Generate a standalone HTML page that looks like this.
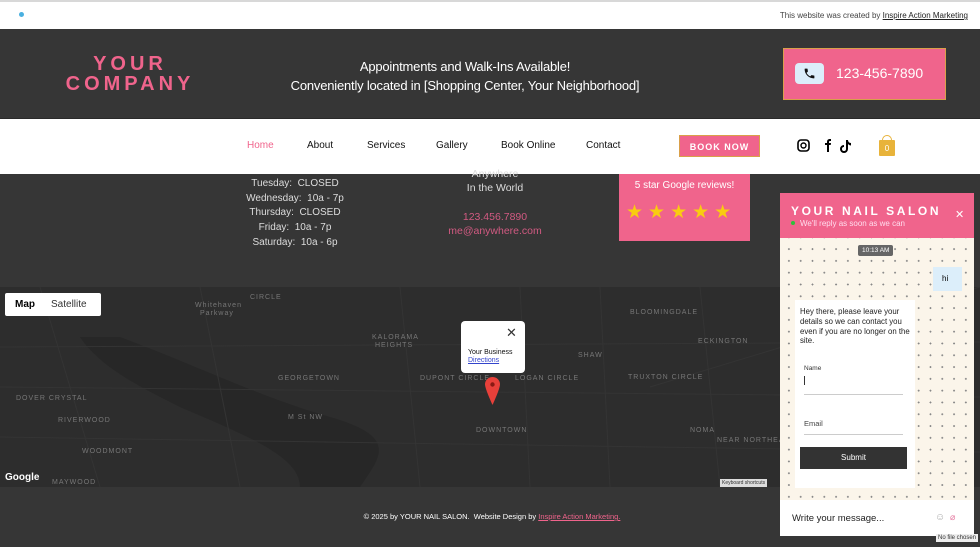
<!DOCTYPE html>
<html><head><meta charset="utf-8"><style>
*{margin:0;padding:0;box-sizing:border-box}
body{width:980px;height:547px;overflow:hidden;background:#363636;font-family:"Liberation Sans",sans-serif;position:relative}
.abs{position:absolute}
.pink{background:#f0648c}
.t{color:#fff;text-align:center}
</style></head><body>
<div class="abs" style="left:0;top:0;width:980px;height:29px;background:#fff;border-top:2px solid #d8d8d8"></div>
<div class="abs" style="left:19px;top:12px;width:5px;height:5px;border-radius:50%;background:#4ab0e0"></div>
<div class="abs" style="right:12px;top:11px;font-size:8px;color:#444">This website was created by <u style="color:#222">Inspire Action Marketing</u></div>
<div class="abs" style="left:0;top:29px;width:980px;height:89px;background:#363636"></div>
<div class="abs" style="left:62px;top:54px;width:136px;color:#f0648c;font-weight:bold;font-size:20px;letter-spacing:4px;line-height:20px;text-align:center">YOUR<br>COMPANY</div>
<div class="abs t" style="left:270px;top:57px;width:390px;font-size:13px;line-height:19px;letter-spacing:-0.2px">Appointments and Walk-Ins Available!<br>Conveniently located in [Shopping Center, Your Neighborhood]</div>
<div class="abs pink" style="left:783px;top:48px;width:163px;height:52px;border:1px solid #d9a04a"></div>
<div class="abs" style="left:795px;top:63px;width:29px;height:21px;background:#dceefa;border-radius:4px"></div>
<svg class="abs" style="left:803px;top:67px" width="13" height="13" viewBox="0 0 24 24"><path d="M6.6 10.8c1.4 2.8 3.8 5.1 6.6 6.6l2.2-2.2c.3-.3.7-.4 1-.2 1.1.4 2.3.6 3.6.6.6 0 1 .4 1 1V20c0 .6-.4 1-1 1C10.6 21 3 13.4 3 4c0-.6.4-1 1-1h3.5c.6 0 1 .4 1 1 0 1.3.2 2.5.6 3.6.1.3 0 .7-.2 1z" fill="#111"/></svg>
<div class="abs" style="left:836px;top:65px;color:#fff;font-size:14px">123-456-7890</div>
<div class="abs" style="left:0;top:118px;width:980px;height:56px;background:#fff;border-top:1px solid #2a2a2a"></div>
<div class="abs" style="top:140px;left:247px;font-size:10px;color:#f0648c">Home</div>
<div class="abs" style="top:140px;left:307px;font-size:10px;color:#111">About</div>
<div class="abs" style="top:140px;left:367px;font-size:10px;color:#111">Services</div>
<div class="abs" style="top:140px;left:436px;font-size:10px;color:#111">Gallery</div>
<div class="abs" style="top:140px;left:501px;font-size:10px;color:#111">Book Online</div>
<div class="abs" style="top:140px;left:586px;font-size:10px;color:#111">Contact</div>
<div class="abs pink" style="left:679px;top:135px;width:81px;height:22px;color:#fff;font-size:9px;letter-spacing:1px;text-align:center;line-height:22px;font-weight:bold;border:1px solid #d9a04a">BOOK NOW</div>
<svg class="abs" style="left:797px;top:139px" width="60" height="14"><rect x="1" y="1" width="11" height="11" rx="3" fill="none" stroke="#000" stroke-width="1.6"/><circle cx="6.5" cy="6.5" r="2.5" fill="none" stroke="#000" stroke-width="1.4"/><path d="M30 13V6h-2V4h2V3c0-2 1-3 3-3h1v2h-1c-1 0-1 .5-1 1v1h2l-.3 2H32v7z" fill="#000"/><path d="M49 1v9a2 2 0 1 1-2-2V6a4 4 0 1 0 4 4V5c1 1 2 1.5 3 1.5V4c-2 0-3-1.5-3-3z" fill="#000"/></svg>
<div class="abs" style="left:879px;top:140px;width:16px;height:16px;background:#e8b33a;border-radius:1px;color:#fff;font-size:8px;text-align:center;line-height:18px">0</div>
<div class="abs" style="left:882px;top:135px;width:10px;height:8px;border:1.5px solid #e8b33a;border-bottom:none;border-radius:5px 5px 0 0"></div>
<div class="abs t" style="left:220px;top:177px;width:150px;font-size:10px;line-height:14.7px;color:#ddd">Tuesday:&nbsp; CLOSED<br>Wednesday:&nbsp; 10a - 7p<br>Thursday:&nbsp; CLOSED<br>Friday:&nbsp; 10a - 7p<br>Saturday:&nbsp; 10a - 6p</div>
<div class="abs t" style="left:420px;top:167px;width:150px;font-size:10.5px;line-height:14px;color:#ddd">Anywhere<br>In the World</div>
<div class="abs t" style="left:420px;top:210px;width:150px;font-size:10.5px;line-height:14px;color:#d25a82">123.456.7890<br>me@anywhere.com</div>
<div class="abs pink" style="left:619px;top:174px;width:131px;height:67px"></div>
<div class="abs t" style="left:619px;top:180px;width:131px;font-size:10px">5 star Google reviews!</div>
<div class="abs" style="left:626px;top:201px;width:125px;font-size:19px;color:#f9cc10;letter-spacing:5px">★★★★★</div>
<div class="abs" style="left:0;top:287px;width:980px;height:200px;background:#2d2d2d;overflow:hidden">
<svg width="980" height="200" style="position:absolute;left:0;top:0">
<path d="M120 50 C200 80 260 110 330 130 C400 150 380 170 360 200 L300 200 C300 170 250 150 180 120 C140 100 100 80 80 50Z" fill="#272727"/>
<g stroke="#343434" stroke-width="1" fill="none">
<path d="M0 100 L980 110"/><path d="M0 150 L980 165"/><path d="M400 0 L420 200"/><path d="M520 0 L530 200"/><path d="M600 0 L610 200"/><path d="M650 100 L980 0"/><path d="M200 0 L240 200"/><path d="M40 0 L100 200"/><path d="M0 60 L980 55"/><path d="M700 0 L720 200"/><path d="M850 0 L860 200"/>
</g>
<g fill="#777" font-size="7" font-family="Liberation Sans" letter-spacing="1">
<text x="250" y="12">CIRCLE</text><text x="195" y="20">Whitehaven</text><text x="200" y="28">Parkway</text>
<text x="372" y="52">KALORAMA</text><text x="375" y="60">HEIGHTS</text><text x="630" y="27">BLOOMINGDALE</text>
<text x="698" y="56">ECKINGTON</text><text x="578" y="70">SHAW</text><text x="278" y="93">GEORGETOWN</text>
<text x="420" y="93">DUPONT CIRCLE</text><text x="515" y="93">LOGAN CIRCLE</text><text x="628" y="92">TRUXTON CIRCLE</text>
<text x="16" y="113">DOVER CRYSTAL</text><text x="58" y="135">RIVERWOOD</text><text x="476" y="145">DOWNTOWN</text>
<text x="690" y="145">NOMA</text><text x="717" y="155">NEAR NORTHEAST</text><text x="82" y="166">WOODMONT</text>
<text x="52" y="197">MAYWOOD</text><text x="288" y="132">M St NW</text>
</g></svg>
<div class="abs" style="left:5px;top:6px;width:96px;height:23px;background:#fff;border-radius:2px;font-size:10px;line-height:23px"><b style="margin-left:10px">Map</b><span style="margin-left:16px;color:#333">Satellite</span></div>
<div class="abs" style="left:5px;top:185px;color:#fff;font-size:10px;font-weight:bold">Google</div>
<div class="abs" style="left:720px;top:192px;background:#ddd;font-size:5px;color:#333;padding:1px 2px">Keyboard shortcuts</div>
<div class="abs" style="left:461px;top:34px;width:64px;height:52px;background:#fff;border-radius:4px"></div>
<div class="abs" style="left:506px;top:38px;font-size:13px;color:#333">✕</div>
<div class="abs" style="left:468px;top:62px;font-size:7px;color:#111;line-height:8px">Your Business<br><u style="color:#3344cc">Directions</u></div>
<svg class="abs" style="left:485px;top:90px" width="15" height="28" viewBox="0 0 15 28"><path d="M7.5 0C3.4 0 0 3.2 0 7.3 0 12 7.5 28 7.5 28S15 12 15 7.3C15 3.2 11.6 0 7.5 0z" fill="#e8403a"/><circle cx="7.5" cy="7.5" r="2.2" fill="#8a1a14"/></svg>
</div>
<div class="abs t" style="left:300px;top:512px;width:384px;font-size:7.5px">© 2025 by YOUR NAIL SALON.&nbsp; Website Design by <u style="color:#f0648c">Inspire Action Marketing.</u></div>
<div class="abs" style="left:780px;top:193px;width:194px;height:343px;background:#fbf5ea;background-image:radial-gradient(#888 0.8px,transparent 1px);background-size:11.8px 11.8px;background-position:3px 3px"></div>
<div class="abs pink" style="left:780px;top:193px;width:194px;height:45px"></div>
<div class="abs" style="left:791px;top:204px;color:#fff;font-weight:bold;font-size:12px;letter-spacing:2.6px">YOUR NAIL SALON</div>
<div class="abs" style="left:955px;top:208px;color:#fff;font-size:11px">✕</div>
<div class="abs" style="left:791px;top:221px;width:4px;height:4px;background:#2fbf3a;border-radius:50%"></div>
<div class="abs" style="left:800px;top:219px;color:#fde;font-size:8px">We'll reply as soon as we can</div>
<div class="abs" style="left:858px;top:245px;background:#666;color:#fff;font-size:6.5px;padding:2px 4px;border-radius:2px">10:13 AM</div>
<div class="abs" style="left:933px;top:267px;width:29px;height:24px;background:#dceefa;font-size:8px;line-height:24px;padding-left:9px">hi</div>
<div class="abs" style="left:795px;top:300px;width:120px;height:188px;background:#fff"></div>
<div class="abs" style="left:800px;top:307px;width:110px;font-size:7.8px;line-height:9.8px;color:#222">Hey there, please leave your details so we can contact you even if you are no longer on the site.</div>
<div class="abs" style="left:804px;top:365px;font-size:6.5px;color:#333">Name</div>
<div class="abs" style="left:804px;top:376px;width:1px;height:9px;background:#333"></div>
<div class="abs" style="left:804px;top:394px;width:99px;height:1px;background:#ccc"></div>
<div class="abs" style="left:804px;top:419px;font-size:7.5px;color:#444">Email</div>
<div class="abs" style="left:804px;top:434px;width:99px;height:1px;background:#ccc"></div>
<div class="abs" style="left:800px;top:447px;width:107px;height:22px;background:#333;color:#fff;font-size:8px;text-align:center;line-height:22px">Submit</div>
<div class="abs" style="left:780px;top:500px;width:194px;height:36px;background:#fff"></div>
<div class="abs" style="left:792px;top:513px;font-size:9.5px;color:#222">Write your message...</div>
<div class="abs" style="left:935px;top:512px;font-size:10px;color:#aaa">☺</div>
<div class="abs" style="left:950px;top:512px;font-size:9px;color:#e57aa0">⌀</div>
<div class="abs" style="left:936px;top:534px;background:#eee;font-size:6px;color:#333;padding:1px 2px">No file chosen</div>
</body></html>
